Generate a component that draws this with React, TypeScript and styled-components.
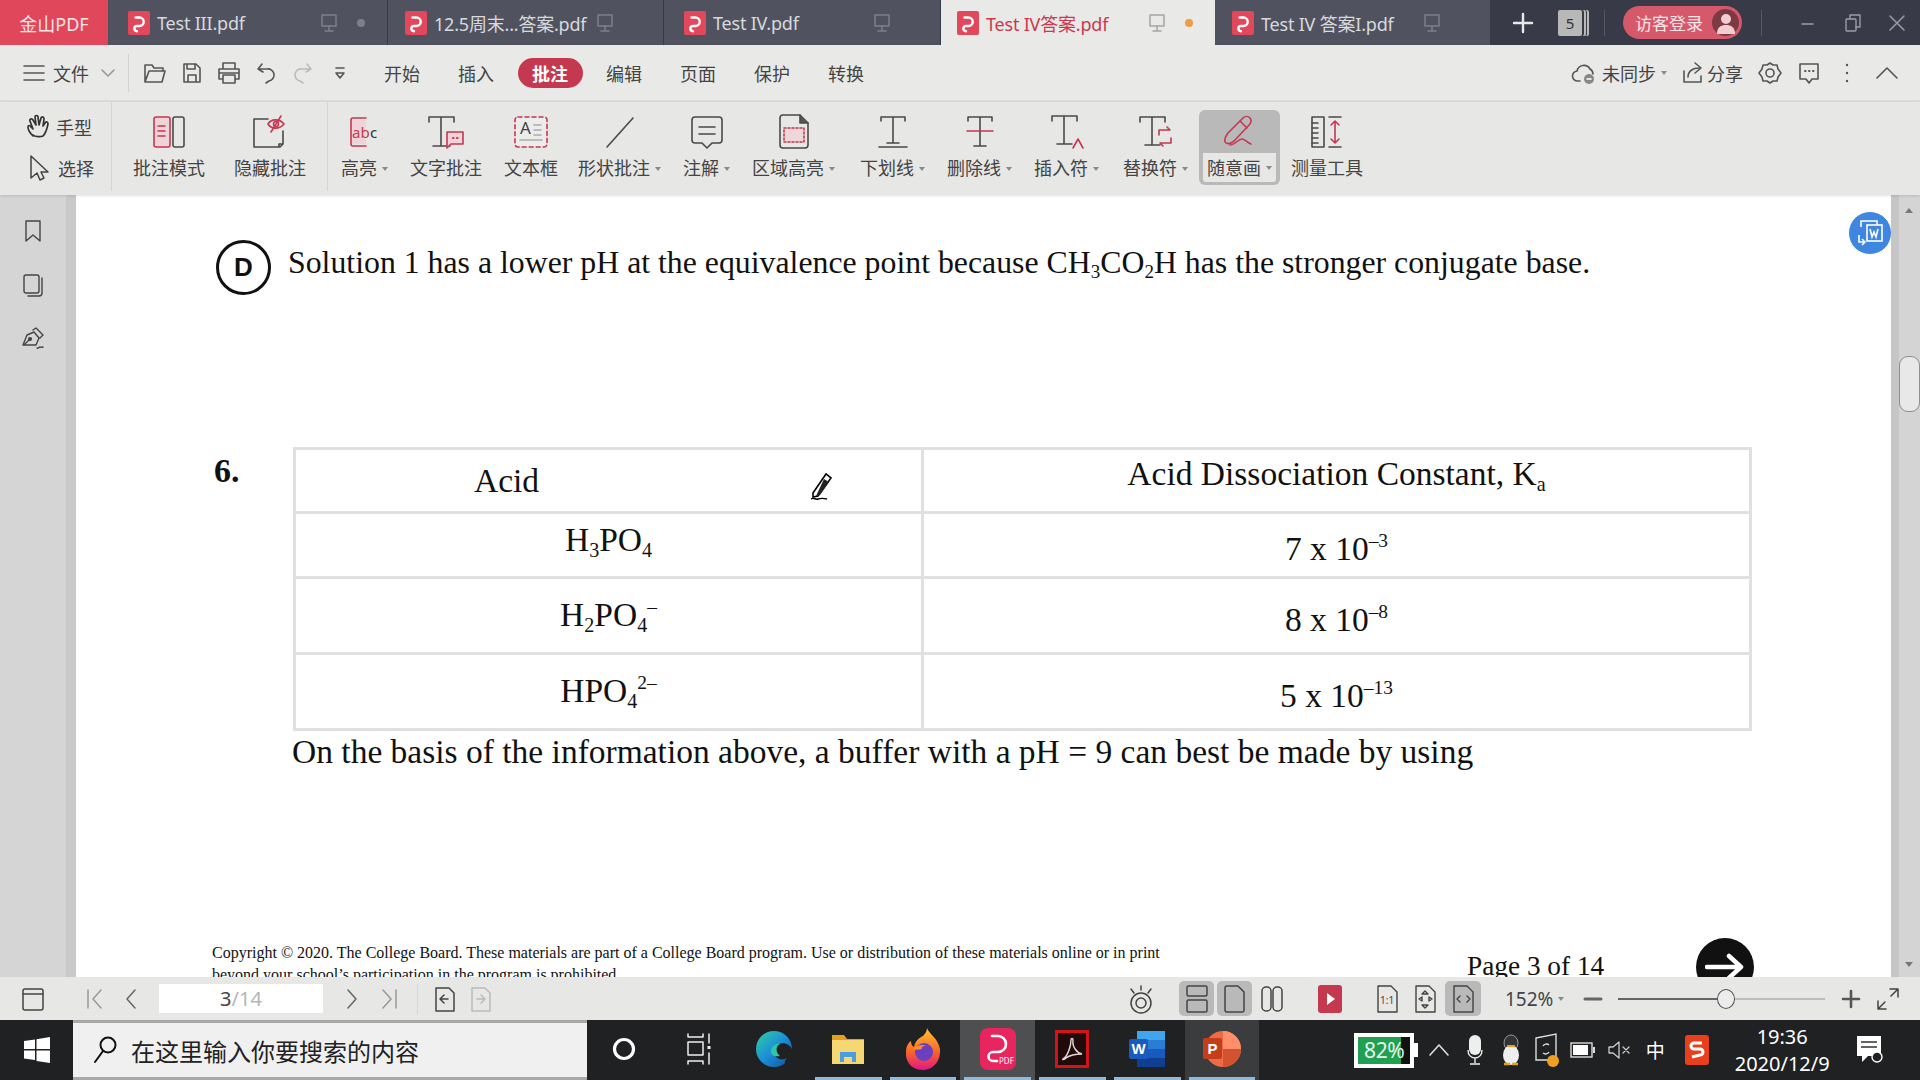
import React from 'react';
import styled, { createGlobalStyle } from 'styled-components';

const UI = `"Noto Sans", "Noto Sans CJK SC", sans-serif`;
const SERIF = `"Liberation Serif", "Times New Roman", serif`;
const RED = '#c4394f';
const DARK = '#4a4a4a';

const Global = createGlobalStyle`
  html, body { margin: 0; padding: 0; width: 1920px; height: 1080px; overflow: hidden; background: #fff; }
  * { box-sizing: border-box; }
  #root { width: 1920px; height: 1080px; }
`;

const Shell = styled.div`
  width: 1920px; height: 1080px; display: flex; flex-direction: column; overflow: hidden; font-family: ${UI};
`;

/* ---------- tab bar ---------- */
const TabBar = styled.div`
  height: 45px; flex: none; display: flex; background: #383a47; color: #fff;
`;
const Brand = styled.div`
  width: 108px; background: #e0475a; color: #fbe4e6; font-size: 18px; display: flex; align-items: center; justify-content: center;
`;
const Tab = styled.div<{ $w: number; $pl: number; $active?: boolean }>`
  width: ${p => p.$w}px; margin-right: ${p => (p.$active ? 0 : 1)}px; display: flex; align-items: center;
  padding: 0 22px 0 ${p => p.$pl}px; font-size: 18px;
  background: ${p => (p.$active ? '#e9e9e7' : '#50535f')};
  color: ${p => (p.$active ? '#c93a50' : '#d8d9dd')};
`;
const TabTitle = styled.span`
  flex: 1; margin-left: 6px; white-space: nowrap; letter-spacing: -0.2px; overflow: hidden;
`;
const TabDot = styled.span<{ $color?: string }>`
  width: 8px; height: 8px; border-radius: 50%; margin-left: 19px; background: ${p => p.$color || 'transparent'};
`;
const BarRight = styled.div`
  flex: 1; display: flex; align-items: center;
`;
const BarSlot = styled.div<{ $ml: number }>`
  margin-left: ${p => p.$ml}px; display: flex; align-items: center; justify-content: center;
`;
const CountBox = styled.div`
  width: 24px; height: 26px; background: #b8b8b8; color: #333; font-size: 15px; border-radius: 2px;
  display: flex; align-items: center; justify-content: center;
  box-shadow: 2px 0 0 #383a47, 4px 0 0 #b8b8b8, 5px 0 0 #383a47, 7px 0 0 #b8b8b8;
`;
const BarSep = styled.div<{ $ml: number }>`
  width: 1px; height: 26px; background: #55576a; margin-left: ${p => p.$ml}px;
`;
const LoginPill = styled.div`
  width: 119px; height: 33px; margin-left: 18px; border-radius: 17px; background: #d5596a; color: #fbe4e6;
  font-size: 17px; display: flex; align-items: center; justify-content: space-between; padding: 0 3px 0 12px;
`;
const Avatar = styled.div`
  width: 27px; height: 27px; border-radius: 50%; background: #7c3a44; display: flex; align-items: center; justify-content: center;
`;

/* ---------- menu bar ---------- */
const MenuBar = styled.div`
  height: 57px; flex: none; display: flex; align-items: center; padding-left: 23px; background: #e9e9e7;
  border-bottom: 2px solid #dcdcda; color: #444; font-size: 18px;
`;
const FileLabel = styled.span`
  margin-left: 8px; width: 47px;
`;
const MenuSep = styled.div`
  width: 1px; height: 38px; background: #d3d3d3; margin-left: 12px; margin-right: 7px;
`;
const QuickBtn = styled.div`
  width: 37px; display: flex; justify-content: center; align-items: center;
`;
const MenuTabs = styled.div`
  margin-left: 7px; display: flex;
`;
const MenuTab = styled.div`
  width: 74px; display: flex; justify-content: center; align-items: center; height: 30px;
`;
const ActivePill = styled.span`
  width: 65px; height: 30px; background: ${RED}; color: #fff; font-weight: 700; border-radius: 15px;
  display: flex; align-items: center; justify-content: center;
`;
const MenuRight = styled.div`
  margin-left: auto; display: flex; align-items: center; padding-right: 22px;
`;
const MenuSlot = styled.div<{ $ml?: number }>`
  margin-left: ${p => p.$ml || 0}px; display: flex; align-items: center;
`;
const Caret = styled.span`
  display: inline-block; width: 0; height: 0; margin-left: 5px; margin-top: 1px;
  border-left: 3px solid transparent; border-right: 3px solid transparent; border-top: 4px solid #8a8a8a;
`;

/* ---------- ribbon ---------- */
const Ribbon = styled.div`
  height: 93px; flex: none; display: flex; background: #e7e7e5; color: #444; position: relative; z-index: 2;
  box-shadow: 0 1px 3px rgba(0,0,0,.12);
`;
const ToolColumn = styled.div`
  width: 112px; padding: 11px 0 0 25px; display: flex; flex-direction: column; gap: 13px;
  border-right: 1px solid #d5d5d3; margin-bottom: 4px;
`;
const ToolRow = styled.div`
  display: flex; align-items: center; gap: 5px; font-size: 18px; height: 28px;
`;
const ToolGroup = styled.div<{ $gap: number; $left: number; $right?: number; $sep?: boolean }>`
  display: flex; gap: ${p => p.$gap}px; padding: 0 ${p => p.$right || 0}px 0 ${p => p.$left}px;
  ${p => p.$sep && 'border-right: 1px solid #d5d5d3; margin-bottom: 4px;'}
`;
const Tool = styled.div<{ $shift?: number }>`
  margin-top: 10px; margin-left: ${p => p.$shift || 0}px; display: flex; flex-direction: column; align-items: center;
`;
const ActiveTool = styled.div`
  margin: 8px -11px 0 -11px; padding: 2px 4px 3px; height: 75px; background: #b9b9b9; border-radius: 6px;
  display: flex; flex-direction: column; align-items: center;
`;
const ToolIcon = styled.div`
  height: 40px; display: flex; align-items: center; justify-content: center;
`;
const ToolLabel = styled.div<{ $boxed?: boolean }>`
  height: ${p => (p.$boxed ? 29 : 24)}px; margin-top: ${p => (p.$boxed ? 1 : 4)}px; font-size: 18px; line-height: 24px; white-space: nowrap;
  display: flex; align-items: center;
  ${p => p.$boxed && 'background:#e7e7e5; padding: 0 4px; border-radius: 0 0 3px 3px;'}
`;

/* ---------- body ---------- */
const Body = styled.div`
  flex: 1; min-height: 0; display: flex;
`;
const SideBar = styled.div`
  width: 76px; flex: none; background: linear-gradient(90deg, #d5d5d5 0, #d5d5d5 66px, #c9c9c9 66px, #c9c9c9 100%);
  display: flex; flex-direction: column; align-items: center; padding: 20px 10px 0 0; gap: 22px;
`;
const SideBtn = styled.div`
  height: 32px; display: flex; align-items: center; justify-content: center;
`;
const PageArea = styled.div`
  flex: 1; min-width: 0; background: #fff; position: relative; overflow: hidden; color: #111; font-family: ${SERIF};
`;
const AnswerRow = styled.div`
  display: flex; align-items: center; gap: 17px; padding: 45px 0 0 140px; height: 100px;
`;
const AnswerBadge = styled.div`
  width: 55px; height: 55px; border-radius: 50%; border: 3px solid #111; background: #fff; flex: none;
  font-family: "Liberation Sans", sans-serif; font-weight: 700; font-size: 26px;
  display: flex; align-items: center; justify-content: center;
`;
const AnswerText = styled.div`
  font-size: 31.8px; white-space: nowrap; margin-top: -9px;
`;
const Sub = styled.sub`
  font-size: 60%; line-height: 0; vertical-align: -0.28em;
`;
const Sup = styled.sup`
  font-size: 58%; line-height: 0; vertical-align: 0.68em;
`;
const Question = styled.div`
  display: flex; margin-top: 152px; padding-left: 138px;
`;
const QuestionNo = styled.div`
  width: 79px; font-weight: 700; font-size: 34px; line-height: 1; padding-top: 7px;
`;
const AcidTable = styled.div`
  width: 1459px; height: 284px; display: grid; grid-template-columns: 628px 1fr;
  grid-template-rows: 61px 65px 76px 76px; border: 3px solid #e0e0e0;
`;
const Cell = styled.div<{ $pt?: number; $pb?: number; $pr?: number; $line?: boolean }>`
  display: flex; align-items: center; justify-content: center; white-space: nowrap; font-size: 33.5px;
  padding: ${p => p.$pt || 0}px ${p => p.$pr || 0}px ${p => p.$pb || 0}px 0;
  border-top: ${p => (p.$line ? '3px solid #e0e0e0' : '0')};
`;
const LeftCell = styled(Cell)`
  border-right: 3px solid #e0e0e0;
`;
const Formula = styled.span`
  display: block; line-height: 40px;
`;
const Prompt = styled.div`
  margin: 2px 0 0 216px; font-size: 33.5px; white-space: nowrap; line-height: 38px;
`;
const Footer = styled.div`
  display: flex; margin: 170px 0 0 136px;
`;
const Copyright = styled.div`
  width: 1255px; font-size: 16px; line-height: 22px; padding-top: 1px; white-space: nowrap;
`;
const PageLabel = styled.div`
  width: 229px; font-size: 27.3px; line-height: 30px; padding-top: 10px;
`;
const NextCircle = styled.div`
  width: 58px; height: 58px; border-radius: 50%; background: #111; display: flex; align-items: center; justify-content: center;
  margin-top: -3px;
`;
const PenCursor = styled.div`
  position: absolute; left: 734px; top: 276px;
`;
const FloatBtn = styled.div`
  position: absolute; right: -1px; top: 16px; width: 44px; height: 44px; border-radius: 50%;
  background: #3f86e0; border: 1px solid #fff; display: flex; align-items: center; justify-content: center;
`;
const ScrollBar = styled.div`
  width: 29px; flex: none; display: flex; flex-direction: column; align-items: flex-end;
  background: linear-gradient(90deg, #c6c6c6 0, #c6c6c6 8px, #d4d4d4 8px);
`;
const ScrollArrowUp = styled.div`
  width: 0; height: 0; margin: 13px 7px 0 0; border-left: 4px solid transparent; border-right: 4px solid transparent; border-bottom: 5px solid #777;
`;
const ScrollThumb = styled.div`
  width: 21px; height: 56px; margin-top: 143px; border: 1px solid #8e8e8e; border-radius: 9px; background: #e8e8e8;
`;
const ScrollArrowDown = styled.div`
  width: 0; height: 0; margin: auto 7px 10px 0; border-left: 4px solid transparent; border-right: 4px solid transparent; border-top: 5px solid #777;
`;

/* ---------- status bar ---------- */
const StatusBar = styled.div`
  height: 43px; flex: none; display: flex; align-items: center; background: #e7e7e5; color: #444; position: relative; z-index: 2;
`;
const StatusBtn = styled.div<{ $w?: number; $ml?: number; $on?: boolean }>`
  width: ${p => p.$w || 36}px; height: 35px; margin-left: ${p => p.$ml || 0}px; flex: none; border-radius: 5px;
  display: flex; align-items: center; justify-content: center; background: ${p => (p.$on ? '#b9b9b9' : 'transparent')};
`;
const PageInput = styled.div`
  width: 164px; height: 29px; margin-left: 11px; background: #fff; font-size: 20px; color: #444;
  display: flex; align-items: center; justify-content: center;
`;
const Faded = styled.span`
  color: #b5b5b5;
`;
const StatusSep = styled.div`
  width: 1px; height: 30px; background: #d8d8d6; margin-left: 10px;
`;
const StatusRight = styled.div`
  margin-left: auto; display: flex; align-items: center; padding-right: 14px;
`;
const Zoom = styled.div`
  width: 64px; margin-left: 24px; font-size: 19px; display: flex; align-items: center; white-space: nowrap;
`;
const Slider = styled.div`
  width: 207px; height: 2px; margin-left: 13px; position: relative; background: #bdbdbd;
`;
const SliderFill = styled.div<{ $pct: number }>`
  width: ${p => p.$pct}%; height: 2px; background: #666;
`;
const SliderKnob = styled.div<{ $pct: number }>`
  position: absolute; left: ${p => p.$pct}%; top: -9px; margin-left: -9px; width: 18px; height: 20px; border-radius: 50%;
  background: #ececec; border: 1.5px solid #555;
`;

/* ---------- taskbar ---------- */
const TaskBar = styled.div`
  height: 60px; flex: none; background: #1f2122; display: flex; align-items: stretch; color: #fff;
`;
const StartBtn = styled.div`
  width: 73px; display: flex; align-items: center; justify-content: center;
`;
const SearchBox = styled.div`
  width: 514px; background: #f0f0f0; border-top: 3px solid #a8a8a8; border-bottom: 3px solid #a8a8a8;
  display: flex; align-items: center; padding-left: 20px; gap: 14px; color: #222; font-size: 24px;
`;
const TaskItem = styled.div<{ $open?: boolean; $bg?: string }>`
  width: 74.7px; display: flex; align-items: center; justify-content: center; position: relative; padding-bottom: 3px;
  background: ${p => p.$bg || 'transparent'};
  ${p => p.$open && `&::after { content: ''; position: absolute; left: 4px; right: 4px; bottom: 0; height: 3px; background: #8bbbe0; }`}
`;
const Battery = styled.div`
  margin-left: 95px; align-self: center; display: flex; align-items: center;
`;
const BatteryBody = styled.div`
  width: 60px; height: 35px; border: 4px solid #fff; background: linear-gradient(90deg, #20a050 0 82%, #111 82%);
  color: #e8f6ec; font-size: 21px; display: flex; align-items: center; justify-content: center; letter-spacing: -0.4px;
`;
const BatteryNub = styled.div`
  width: 4px; height: 14px; background: #fff;
`;
const TrayItem = styled.div<{ $ml?: number }>`
  width: 36px; margin-left: ${p => p.$ml || 0}px; display: flex; align-items: center; justify-content: center; font-size: 19px;
`;
const Clock = styled.div`
  width: 92px; margin-left: 21px; display: flex; flex-direction: column; align-items: center; justify-content: center; gap: 3px;
  font-size: 20px; line-height: 24px; white-space: nowrap;
`;
const Notify = styled.div`
  width: 44px; margin-left: 20px; display: flex; align-items: center; justify-content: center;
`;

/* ---------- icons ---------- */
const Ic = ({ s = 34, w, h, c = DARK, sw = 1.6, children }: { s?: number; w?: number; h?: number; c?: string; sw?: number; children: React.ReactNode }) => (
  <svg width={w || s} height={h || s} viewBox={`0 0 ${w || s} ${h || s}`} fill="none" stroke={c} strokeWidth={sw} strokeLinecap="round" strokeLinejoin="round">{children}</svg>
);
const PdfMark = () => (
  <svg width="24" height="24" viewBox="0 0 24 24">
    <rect x="1" y="0" width="22" height="24" rx="2" fill="#e2475c" />
    <path d="M8.5 6.5h4a4 4 0 0 1 0 8.5h-2.5a2.6 2.6 0 0 0 0 5.2" fill="none" stroke="#fff" strokeWidth="2.4" strokeLinecap="round" />
  </svg>
);
const Monitor = ({ c = '#7d808c' }: { c?: string }) => (
  <Ic w={18} h={22} c={c} sw={1.5}><rect x="2" y="3" width="14" height="11" /><path d="M9 14v4M5 19h8" /></Ic>
);

const IconMode = () => <Ic w={34} h={34}><rect x="2" y="2" width="16" height="30" rx="2" fill="#f0d3d8" stroke={RED} /><rect x="21" y="2" width="11" height="30" rx="2" /><path d="M6 11h7M6 16h7M6 21h7" stroke={RED} /></Ic>;
const IconHide = () => <Ic w={40} h={34}><path d="M18 4H4v28h26l3-3V16M33 29h-4v3" /><path d="M18 9c3-5 11-6 16 0-5 6-13 5-16 0z" stroke={RED} /><circle cx="26" cy="9" r="2.5" stroke={RED} /><path d="M31 1 21 17" stroke={RED} /></Ic>;
const IconAbc = () => <Ic w={34} h={34}><rect x="3" y="5" width="15" height="24" fill="#f0d3d8" stroke="none" /><path d="M18 3H5a2 2 0 0 0-2 2v24a2 2 0 0 0 2 2h13" stroke={RED} /><text x="4" y="23" fontFamily="Noto Sans, sans-serif" fontSize="15" fill={RED} stroke="none">ab</text><text x="22" y="23" fontFamily="Noto Sans, sans-serif" fontSize="15" fill="#333" stroke="none">c</text></Ic>;
const IconTextNote = () => <Ic w={38} h={34}><path d="M2 7V2h25v5M14 2v29M6 31h17" /><path d="M20 17h16v12H24l-4 4z" fill="#f0d3d8" stroke={RED} /><path d="M26 23h.5M30 23h.5" stroke={RED} strokeWidth="2.2" /></Ic>;
const IconTextBox = () => <Ic w={36} h={34}><rect x="2" y="2" width="32" height="30" rx="3" fill="#ececec" stroke={RED} strokeDasharray="4 3" /><text x="7" y="19" fontFamily="Noto Sans, sans-serif" fontSize="17" fill="#444" stroke="none">A</text><path d="M21 10h7M21 15h7M21 20h7M7 25h22" stroke="#aaa" /></Ic>;
const IconLine = () => <Ic w={30} h={34}><path d="M28 3 2 32" /></Ic>;
const IconNote = () => <Ic w={32} h={34}><path d="M4 2h24a3 3 0 0 1 3 3v20a3 3 0 0 1-3 3h-7l-5 5-5-5H4a3 3 0 0 1-3-3V5a3 3 0 0 1 3-3z" /><path d="M8 12h16M8 19h16" /></Ic>;
const IconArea = () => <Ic w={30} h={36}><path d="M4 1h17l8 8v22a3 3 0 0 1-3 3H4a3 3 0 0 1-3-3V4a3 3 0 0 1 3-3z" /><path d="M21 1v8h8" fill="#555" /><rect x="5" y="14" width="20" height="14" fill="#efd6da" stroke={RED} strokeDasharray="2 2" /></Ic>;
const IconUnder = () => <Ic w={30} h={34}><path d="M3 6V2h24v4M15 2v26M9 28h12" /><path d="M1 32h28" /></Ic>;
const IconStrike = () => <Ic w={30} h={34}><path d="M3 6V2h24v4M15 2v29M9 31h12" /><path d="M2 16h26" stroke={RED} /></Ic>;
const IconInsert = () => <Ic w={34} h={36}><path d="M2 7V2h25v5M14 2v28M7 30h15" /><path d="M23 34l5-9 5 9" stroke={RED} /></Ic>;
const IconReplace = () => <Ic w={36} h={34}><path d="M2 7V2h25v5M14 2v28M7 30h15" /><path d="M21 20v-5h11l-3-3M33 23v5H22l3 3" stroke={RED} /></Ic>;
const IconPen = () => <Ic w={34} h={34} c={RED}><path d="M2 27c-1-4 1-6 3-9L20 3c2-2 5-2 7 0s1 4 0 6L12 25c-3 3-7 5-10 2z" /><path d="M17 6l7 7M7 30c5 0 8-6 12-6 3 0 4 3 9 5" /></Ic>;
const IconMeasure = () => <Ic w={34} h={34}><rect x="2" y="2" width="12" height="30" /><path d="M2 8h6M2 13h6M2 18h6M2 23h6M2 28h6" /><path d="M19 2h12M19 32h12" /><path d="M25 6v22M21 10l4-4 4 4M21 24l4 4 4-4" stroke={RED} /></Ic>;

const Tools: { label: string; icon: React.ReactNode; caret?: boolean; shift?: number }[] = [
  { label: '高亮', icon: <IconAbc />, caret: true },
  { label: '文字批注', icon: <IconTextNote /> },
  { label: '文本框', icon: <IconTextBox /> },
  { label: '形状批注', icon: <IconLine />, caret: true, shift: -2 },
  { label: '注解', icon: <IconNote />, caret: true },
  { label: '区域高亮', icon: <IconArea />, caret: true },
  { label: '下划线', icon: <IconUnder />, caret: true, shift: 3 },
  { label: '删除线', icon: <IconStrike />, caret: true },
  { label: '插入符', icon: <IconInsert />, caret: true },
  { label: '替换符', icon: <IconReplace />, caret: true, shift: 2 },
];

const tabs = [
  { t: 'Test III.pdf', w: 279, pl: 19, dot: '#7d808c' },
  { t: '12.5周末...答案.pdf', w: 275, pl: 16 },
  { t: 'Test IV.pdf', w: 276, pl: 19 },
  { t: 'Test IV答案.pdf', w: 274, pl: 15, active: true, dot: '#ef9a44' },
  { t: 'Test IV 答案I.pdf', w: 275, pl: 16 },
];

const rows = [
  { l: <>H<Sub>3</Sub>PO<Sub>4</Sub></>, r: <>7 x 10<Sup>–3</Sup></>, lb: 11, rt: 8 },
  { l: <>H<Sub>2</Sub>PO<Sub>4</Sub><Sup>–</Sup></>, r: <>8 x 10<Sup>–8</Sup></>, lb: 2, rt: 8 },
  { l: <>HPO<Sub>4</Sub><Sup>2–</Sup></>, r: <>5 x 10<Sup>–13</Sup></>, lb: 2, rt: 8 },
];

export default function App() {
  return (
    <Shell>
      <Global />
      <TabBar>
        <Brand>金山PDF</Brand>
        {tabs.map(t => (
          <Tab key={t.t} $w={t.w} $pl={t.pl} $active={t.active}>
            <PdfMark />
            <TabTitle>{t.t}</TabTitle>
            <Monitor c={t.active ? '#a5a5a5' : undefined} />
            <TabDot $color={t.dot} />
          </Tab>
        ))}
        <BarRight>
          <BarSlot $ml={21}><Ic s={22} c="#e8e8e8" sw={2.4}><path d="M11 2v18M2 11h18" /></Ic></BarSlot>
          <BarSlot $ml={24}><CountBox>5</CountBox></BarSlot>
          <BarSep $ml={22} />
          <LoginPill>访客登录<Avatar><Ic s={22} c="#f3cdd2" sw={0}><circle cx="11" cy="7" r="5" fill="#f3cdd2" /><path d="M2 22c0-7 4-9 9-9s9 2 9 9z" fill="#f3cdd2" /></Ic></Avatar></LoginPill>
          <BarSep $ml={19} />
          <BarSlot $ml={38}><Ic s={16} c="#9a9ca6" sw={1.6}><path d="M2 9h11" /></Ic></BarSlot>
          <BarSlot $ml={27}><Ic s={20} c="#9a9ca6" sw={1.4}><rect x="3" y="6" width="10" height="12" rx="1" /><path d="M7 6V2h10v12h-4" /></Ic></BarSlot>
          <BarSlot $ml={25}><Ic s={18} c="#9a9ca6" sw={1.5}><path d="M2 2l14 14M16 2 2 16" /></Ic></BarSlot>
        </BarRight>
      </TabBar>

      <MenuBar>
        <Ic w={22} h={20} c="#555"><path d="M1 3h20M1 10h20M1 17h20" /></Ic>
        <FileLabel>文件</FileLabel>
        <Ic s={16} c="#999"><path d="M2 5l6 6 6-6" /></Ic>
        <MenuSep />
        <QuickBtn><Ic w={24} h={22} c="#555"><path d="M2 20V3h7l2 3h9v3M2 20h17l3-11H6z" /></Ic></QuickBtn>
        <QuickBtn><Ic w={22} h={22} c="#555"><path d="M3 2h12l4 4v14H3zM6 2v5h8V2M7 20v-7h8v7" /></Ic></QuickBtn>
        <QuickBtn><Ic w={24} h={24} c="#555"><path d="M6 8V2h12v6M6 18H2V8h20v10h-4M6 14h12v8H6zM3 12h18" /></Ic></QuickBtn>
        <QuickBtn><Ic w={20} h={24} c="#555"><path d="M6 3 2 8l5 3M2 8h9a6 6 0 0 1 2 12l-3 2" /></Ic></QuickBtn>
        <QuickBtn><Ic w={20} h={24} c="#bbb"><path d="M14 3l4 5-5 3M18 8H9a6 6 0 0 0-2 12l3 2" /></Ic></QuickBtn>
        <QuickBtn><Ic w={14} h={18} c="#555"><path d="M3 4h8M3 9l4 5 4-5z" /></Ic></QuickBtn>
        <MenuTabs>
          <MenuTab>开始</MenuTab>
          <MenuTab>插入</MenuTab>
          <MenuTab><ActivePill>批注</ActivePill></MenuTab>
          <MenuTab>编辑</MenuTab>
          <MenuTab>页面</MenuTab>
          <MenuTab>保护</MenuTab>
          <MenuTab>转换</MenuTab>
        </MenuTabs>
        <MenuRight>
          <MenuSlot><Ic w={26} h={24} c="#555"><path d="M9 20H7a5 5 0 0 1-1-10 7 7 0 0 1 13-2 6 6 0 0 1 3 5" /><circle cx="18" cy="18" r="5" fill="#888" stroke="none" /><path d="M16 18h4" stroke="#fff" /></Ic></MenuSlot>
          <MenuSlot $ml={5}>未同步<Caret /></MenuSlot>
          <MenuSlot $ml={13}><Ic s={24} c="#555"><path d="M4 10v11h17v-6M8 16c0-6 5-9 11-9M15 2l6 5-6 5" /></Ic></MenuSlot>
          <MenuSlot $ml={3}>分享</MenuSlot>
          <MenuSlot $ml={15}><Ic s={24} c="#555"><path d="M12 2l3 2 4 0 1 4 3 4-3 4-1 4-4 0-3 2-3-2-4 0-1-4-3-4 3-4 1-4 4 0z" /><circle cx="12" cy="12" r="4" /></Ic></MenuSlot>
          <MenuSlot $ml={15}><Ic s={24} c="#555"><path d="M3 3h18v15h-6l-3 4-3-4H3z" /><path d="M8 10h.5M12 10h.5M16 10h.5" strokeWidth="2" /></Ic></MenuSlot>
          <MenuSlot $ml={19}><Ic w={14} h={24} c="#555" sw={2.4}><path d="M7 4h.01M7 12h.01M7 20h.01" /></Ic></MenuSlot>
          <MenuSlot $ml={22}><Ic w={22} h={14} c="#555"><path d="M1 12 11 2l10 10" /></Ic></MenuSlot>
        </MenuRight>
      </MenuBar>

      <Ribbon>
        <ToolColumn>
          <ToolRow><Ic s={26} c="#333" sw={1.7}><path d="M8 22C5 19 3 15 3 13c0-2 2-2 3 0l2 2-3-8c-1-2 2-3 3-1l3 5-1-8c0-2 3-2 3 0l1 8 2-7c1-2 3-1 3 1l-1 7 2-3c1-2 3-1 3 1-1 5-3 10-5 12-2 1-8 1-10-1z" /></Ic>手型</ToolRow>
          <ToolRow><Ic s={28} c="#444" sw={1.5}><path d="M6 2v22l6-5 3 7 4-2-3-6h7z" /></Ic>选择</ToolRow>
        </ToolColumn>
        <ToolGroup $gap={29} $left={21} $right={21} $sep>
          <Tool><ToolIcon><IconMode /></ToolIcon><ToolLabel>批注模式</ToolLabel></Tool>
          <Tool><ToolIcon><IconHide /></ToolIcon><ToolLabel>隐藏批注</ToolLabel></Tool>
        </ToolGroup>
        <ToolGroup $gap={22} $left={13}>
          {Tools.map(t => (
            <Tool key={t.label} $shift={t.shift}>
              <ToolIcon>{t.icon}</ToolIcon>
              <ToolLabel>{t.label}{t.caret && <Caret />}</ToolLabel>
            </Tool>
          ))}
          <ActiveTool>
            <ToolIcon><IconPen /></ToolIcon>
            <ToolLabel $boxed>随意画<Caret /></ToolLabel>
          </ActiveTool>
          <Tool><ToolIcon><IconMeasure /></ToolIcon><ToolLabel>测量工具</ToolLabel></Tool>
        </ToolGroup>
      </Ribbon>

      <Body>
        <SideBar>
          <SideBtn><Ic w={18} h={24} c="#444" sw={1.4}><path d="M2 2h14v20l-7-6-7 6z" /></Ic></SideBtn>
          <SideBtn><Ic w={20} h={24} c="#444" sw={1.4}><rect x="1" y="2" width="15" height="18" rx="2" /><path d="M19 5v15a3 3 0 0 1-3 3H5" /></Ic></SideBtn>
          <SideBtn><Ic w={24} h={24} c="#444" sw={1.4}><path d="M2 18 6 8l7-3 5 6-3 7zM12 3l3-2 7 7-3 3M3 18l6-6" /><circle cx="9" cy="12" r="1.4" fill="#444" /><path d="M16 21c1 1 2-1 3-1s1 1 3 0" /></Ic></SideBtn>
        </SideBar>
        <PageArea>
          <AnswerRow>
            <AnswerBadge>D</AnswerBadge>
            <AnswerText>Solution 1 has a lower pH at the equivalence point because CH<Sub>3</Sub>CO<Sub>2</Sub>H has the stronger conjugate base.</AnswerText>
          </AnswerRow>
          <Question>
            <QuestionNo>6.</QuestionNo>
            <AcidTable>
              <LeftCell $pr={204}><Formula>Acid</Formula></LeftCell>
              <Cell $pb={13}><Formula>Acid Dissociation Constant, K<Sub>a</Sub></Formula></Cell>
              {rows.map((r, i) => (
                <React.Fragment key={i}>
                  <LeftCell $line $pb={r.lb}><Formula>{r.l}</Formula></LeftCell>
                  <Cell $line $pt={r.rt}><Formula>{r.r}</Formula></Cell>
                </React.Fragment>
              ))}
            </AcidTable>
          </Question>
          <Prompt>On the basis of the information above, a buffer with a pH = 9 can best be made by using</Prompt>
          <Footer>
            <Copyright>
              Copyright © 2020. The College Board. These materials are part of a College Board program. Use or distribution of these materials online or in print<br />
              beyond your school’s participation in the program is prohibited.
            </Copyright>
            <PageLabel>Page 3 of 14</PageLabel>
            <NextCircle><Ic w={40} h={30} c="#fff" sw={4.5}><path d="M2 15h34M24 4l12 11-12 11" /></Ic></NextCircle>
          </Footer>
          <PenCursor>
            <svg width="26" height="30" viewBox="0 0 26 30" fill="none"><path d="M3 22 16 3l5 4L8 25l-5 1z" fill="#fff" stroke="#000" strokeWidth="1.6" /><path d="M14 8l5 3-9 13-4 1z" fill="#222" /><path d="M1 28c3-2 4 1 7 0s5-1 9 0" stroke="#000" strokeWidth="1.4" /></svg>
          </PenCursor>
          <FloatBtn>
            <svg width="30" height="28" viewBox="0 0 30 28" fill="none" stroke="#fff" strokeWidth="1.6"><path d="M6 8V2h16v4" /><path d="M4 16v7h5M7 20l3 3-3 3" /><rect x="12" y="6" width="15" height="16" fill="#3f86e0" /><path d="M15 10l2 8 2-5 2 5 2-8" /></svg>
          </FloatBtn>
        </PageArea>
        <ScrollBar>
          <ScrollArrowUp />
          <ScrollThumb />
          <ScrollArrowDown />
        </ScrollBar>
      </Body>

      <StatusBar>
        <StatusBtn $w={66}><Ic w={24} h={24} c="#444" sw={1.5}><rect x="2" y="2" width="20" height="21" rx="2" /><path d="M2 7h20" /></Ic></StatusBtn>
        <StatusBtn $ml={11}><Ic w={20} h={24} c="#999" sw={1.5}><path d="M3 3v18M16 3 8 12l8 9" /></Ic></StatusBtn>
        <StatusBtn $w={35}><Ic w={16} h={24} c="#666" sw={1.5}><path d="M12 3 4 12l8 9" /></Ic></StatusBtn>
        <PageInput>3<Faded>/14</Faded></PageInput>
        <StatusBtn $ml={11}><Ic w={16} h={24} c="#666" sw={1.5}><path d="M4 3l8 9-8 9" /></Ic></StatusBtn>
        <StatusBtn $ml={1}><Ic w={20} h={24} c="#999" sw={1.5}><path d="M4 3l8 9-8 9M17 3v18" /></Ic></StatusBtn>
        <StatusSep />
        <StatusBtn $ml={9}><Ic w={24} h={28} c="#444" sw={1.5}><path d="M3 3h13l5 5v18H3z" /><path d="M15 14H8M11 10l-4 4 4 4" /></Ic></StatusBtn>
        <StatusBtn><Ic w={24} h={28} c="#bbb" sw={1.5}><path d="M3 3h13l5 5v18H3z" /><path d="M8 14h7M12 10l4 4-4 4" /></Ic></StatusBtn>
        <StatusRight>
          <StatusBtn><Ic w={28} h={32} c="#444" sw={1.5}><circle cx="14" cy="20" r="10" /><circle cx="14" cy="20" r="5" /><path d="M14 3v4M4 6l3 4M24 6l-3 4" /></Ic></StatusBtn>
          <StatusBtn $ml={20} $w={35} $on><Ic w={24} h={30} c="#444" sw={1.5}><rect x="2" y="2" width="20" height="10" rx="1.5" /><rect x="2" y="16" width="20" height="12" rx="1.5" /></Ic></StatusBtn>
          <StatusBtn $ml={3} $w={35} $on><Ic w={24} h={30} c="#444" sw={1.5}><path d="M4 2h11l6 6v18a2 2 0 0 1-2 2H4a2 2 0 0 1-2-2V4a2 2 0 0 1 2-2z" /></Ic></StatusBtn>
          <StatusBtn $ml={2}><Ic w={24} h={30} c="#444" sw={1.5}><rect x="2" y="3" width="9" height="24" rx="4" /><rect x="13" y="3" width="9" height="24" rx="4" /></Ic></StatusBtn>
          <StatusBtn $ml={22}><svg width="24" height="28" viewBox="0 0 24 28"><rect width="24" height="28" rx="3" fill={RED} /><path d="M9 8l8 6-8 6z" fill="#fff" /></svg></StatusBtn>
          <StatusBtn $ml={21}><Ic w={24} h={30} c="#444" sw={1.4}><path d="M3 2h13l6 6v20H3z" /><text x="5" y="20" fontSize="10" fontFamily="Noto Sans, sans-serif" fill="#444" stroke="none">1:1</text></Ic></StatusBtn>
          <StatusBtn $ml={2}><Ic w={24} h={30} c="#444" sw={1.4}><path d="M3 2h13l6 6v20H3z" /><path d="M12 7l-3 3h6zM12 24l-3-3h6zM6 15l3-2v4zM19 15l-3-2v4z" /></Ic></StatusBtn>
          <StatusBtn $ml={2} $on><Ic w={24} h={30} c="#444" sw={1.4}><path d="M3 2h13l6 6v20H3z" /><path d="M9 12l-3 3 3 3M16 12l3 3-3 3" /></Ic></StatusBtn>
          <Zoom>152%<Caret /></Zoom>
          <StatusBtn $ml={12} $w={24}><Ic w={20} h={6} c="#666" sw={3}><path d="M2 3h16" /></Ic></StatusBtn>
          <Slider><SliderFill $pct={52} /><SliderKnob $pct={52} /></Slider>
          <StatusBtn $ml={14} $w={24}><Ic s={20} c="#555" sw={2.6}><path d="M10 2v16M2 10h16" /></Ic></StatusBtn>
          <StatusBtn $ml={7}><Ic s={24} c="#444" sw={1.5}><path d="M14 2h8v8M2 14v8h8M22 2l-7 7M2 22l7-7" /></Ic></StatusBtn>
        </StatusRight>
      </StatusBar>

      <TaskBar>
        <StartBtn>
          <svg width="26" height="26" viewBox="0 0 26 26" fill="#fff"><path d="M0 4l11-1.6V12H0zM12.5 2.2 26 0v12H12.5zM0 13.5h11v9.6L0 21.6zM12.5 13.5H26V26l-13.5-2z" /></svg>
        </StartBtn>
        <SearchBox>
          <Ic w={24} h={30} c="#111" sw={2}><circle cx="15" cy="10" r="7.5" /><path d="M10 16 2 27" /></Ic>
          在这里输入你要搜索的内容
        </SearchBox>
        <TaskItem><Ic s={24} c="#fff" sw={3.2}><circle cx="12" cy="12" r="9.5" /></Ic></TaskItem>
        <TaskItem><Ic w={26} h={34} c="#eee" sw={1.5}><path d="M2 2v3h15V2M2 10h15v13H2zM2 32v-3h15v3M23 2v9M23 21v11" /><rect x="21.5" y="14" width="3" height="3" fill="#eee" stroke="none" /></Ic></TaskItem>
        <TaskItem>
          <svg width="38" height="42" viewBox="0 0 38 42"><defs><linearGradient id="eg" x1="0" y1="0" x2="1" y2="1"><stop offset="0" stopColor="#2fd0a0" /><stop offset=".5" stopColor="#1b8fd8" /><stop offset="1" stopColor="#0f4f9a" /></linearGradient></defs><circle cx="19" cy="21" r="18" fill="url(#eg)" /><path d="M38 24c-2-8-9-10-14-8-5 2-7 8-3 13 3 3 8 3 11 1-4 5-3 9 4 1 2-2 2-5 2-7z" fill="#1f2122" /><path d="M16 24c0-5 4-9 9-8-5 2-4 9 0 12-4 1-9 0-9-4z" fill="#33c6a6" /></svg>
        </TaskItem>
        <TaskItem $open>
          <svg width="32" height="34" viewBox="0 0 32 34"><path d="M0 3h12l3 4h17v5H0z" fill="#e0a21c" /><rect y="8" width="32" height="24" fill="#f7d774" /><path d="M8 30V20h16v10h-4v-5h-8v5z" fill="#4a9fe0" /></svg>
        </TaskItem>
        <TaskItem $open>
          <svg width="36" height="44" viewBox="0 0 36 44"><defs><linearGradient id="fx" x1="0" y1="0" x2="0" y2="1"><stop offset="0" stopColor="#ffc52e" /><stop offset=".6" stopColor="#f5602c" /><stop offset="1" stopColor="#e31587" /></linearGradient></defs><path d="M22 1c2 6 11 10 13 21 1 12-7 21-17 21S0 36 1 25c0-5 2-9 5-11 0 3 1 5 3 6 1-6 5-9 9-11 2-2 4-5 4-8z" fill="url(#fx)" /><circle cx="19" cy="25" r="9" fill="#6b3fc0" /><path d="M8 22c4-4 10-5 13-3-4 0-5 2-4 3-3 1-6 1-9 0z" fill="#ff8a2c" /></svg>
        </TaskItem>
        <TaskItem $open $bg="#4d4f50">
          <svg width="36" height="42" viewBox="0 0 36 42"><rect width="36" height="42" rx="8" fill="#e8255f" /><path d="M12 8h6a8 8 0 0 1 0 16h-5a4 4 0 0 0 0 9h4" fill="none" stroke="#fff" strokeWidth="2.6" strokeLinecap="round" /><text x="19" y="36" fontSize="8" fill="#fff" fontFamily="Noto Sans, sans-serif">PDF</text></svg>
        </TaskItem>
        <TaskItem $open>
          <svg width="34" height="38" viewBox="0 0 34 38"><rect x="1.5" y="1.5" width="31" height="35" fill="#220a0a" stroke="#d0141a" strokeWidth="3" /><path d="M8 29c4-2 8-12 8-19 0-2 2-2 2 0-1 7 4 13 9 14-5 0-12 1-16 4-2 2-4 2-3 1z" fill="none" stroke="#e0d8d8" strokeWidth="1.4" /></svg>
        </TaskItem>
        <TaskItem $open>
          <svg width="36" height="38" viewBox="0 0 36 38"><rect x="8" y="1" width="28" height="36" rx="2" fill="#2b7cd3" /><rect x="8" y="1" width="28" height="9" fill="#41a5ee" /><rect x="8" y="19" width="28" height="9" fill="#185abd" /><rect x="8" y="28" width="28" height="9" fill="#103f91" /><rect y="9" width="19" height="20" rx="2" fill="#185abd" /><text x="2.5" y="24" fontSize="15" fontWeight="700" fill="#fff" fontFamily="Liberation Sans, sans-serif">W</text></svg>
        </TaskItem>
        <TaskItem $open $bg="#3a3c3d">
          <svg width="38" height="42" viewBox="0 0 38 42"><circle cx="20" cy="21" r="18" fill="#ed6c47" /><path d="M20 3a18 18 0 0 1 18 18H20z" fill="#ff8f6b" /><path d="M20 21h18a18 18 0 0 1-18 18z" fill="#d35230" /><rect y="10" width="19" height="21" rx="2" fill="#c43e1c" /><text x="4.5" y="26" fontSize="15" fontWeight="700" fill="#fff" fontFamily="Liberation Sans, sans-serif">P</text></svg>
        </TaskItem>
        <Battery><BatteryBody>82%</BatteryBody><BatteryNub /></Battery>
        <TrayItem $ml={3}><Ic w={22} h={14} c="#ddd" sw={1.6}><path d="M2 12 11 2l9 10" /></Ic></TrayItem>
        <TrayItem><svg width="16" height="30" viewBox="0 0 16 30" fill="none"><rect x="2" y="0" width="12" height="20" rx="6" fill="#eee" /><path d="M1 15c0 5 3 8 7 8s7-3 7-8M8 23v5M3 29h10" stroke="#eee" strokeWidth="1.4" /></svg></TrayItem>
        <TrayItem><svg width="20" height="32" viewBox="0 0 20 32"><ellipse cx="10" cy="9" rx="7" ry="8" fill="#333" stroke="#999" /><ellipse cx="10" cy="21" rx="8" ry="10" fill="#eee" /><path d="M3 30h6M11 30h6" stroke="#e8a020" strokeWidth="2.4" /><path d="M6 12h8" stroke="#e8a020" strokeWidth="2" /></svg></TrayItem>
        <TrayItem><svg width="26" height="34" viewBox="0 0 26 34" fill="none"><path d="M2 5l20-4v26H2z" stroke="#ddd" strokeWidth="1.4" /><path d="M9 13a4 4 0 0 1 6-1M15 19a4 4 0 0 1-6 1" stroke="#ddd" strokeWidth="1.4" /><circle cx="19" cy="28" r="6" fill="#f0a020" /></svg></TrayItem>
        <TrayItem><svg width="26" height="16" viewBox="0 0 26 16"><rect x="1" y="1" width="21" height="14" fill="none" stroke="#ddd" strokeWidth="1.4" /><rect x="3" y="3" width="15" height="10" fill="#fff" /><rect x="23" y="5" width="2" height="6" fill="#ddd" /></svg></TrayItem>
        <TrayItem><Ic w={24} h={24} c="#ccc" sw={1.3}><path d="M2 9v6h4l6 5V4L6 9zM16 9l6 6M22 9l-6 6" /></Ic></TrayItem>
        <TrayItem>中</TrayItem>
        <TrayItem $ml={6}><svg width="24" height="30" viewBox="0 0 24 30"><rect width="24" height="30" rx="3" fill="#e8401c" /><path d="M17 8H9a3 3 0 0 0 0 6h6a3 3 0 0 1 0 6l-8 2" fill="none" stroke="#fff" strokeWidth="3" /></svg></TrayItem>
        <Clock><span>19:36</span><span>2020/12/9</span></Clock>
        <Notify><svg width="28" height="30" viewBox="0 0 28 30"><path d="M1 1h24v20H12l-6 6v-6H1z" fill="#fff" /><path d="M5 7h16M5 12h16" stroke="#333" strokeWidth="1.4" /><circle cx="21" cy="22" r="5" fill="#1f2122" stroke="#fff" strokeWidth="1.4" /></svg></Notify>
      </TaskBar>
    </Shell>
  );
}
